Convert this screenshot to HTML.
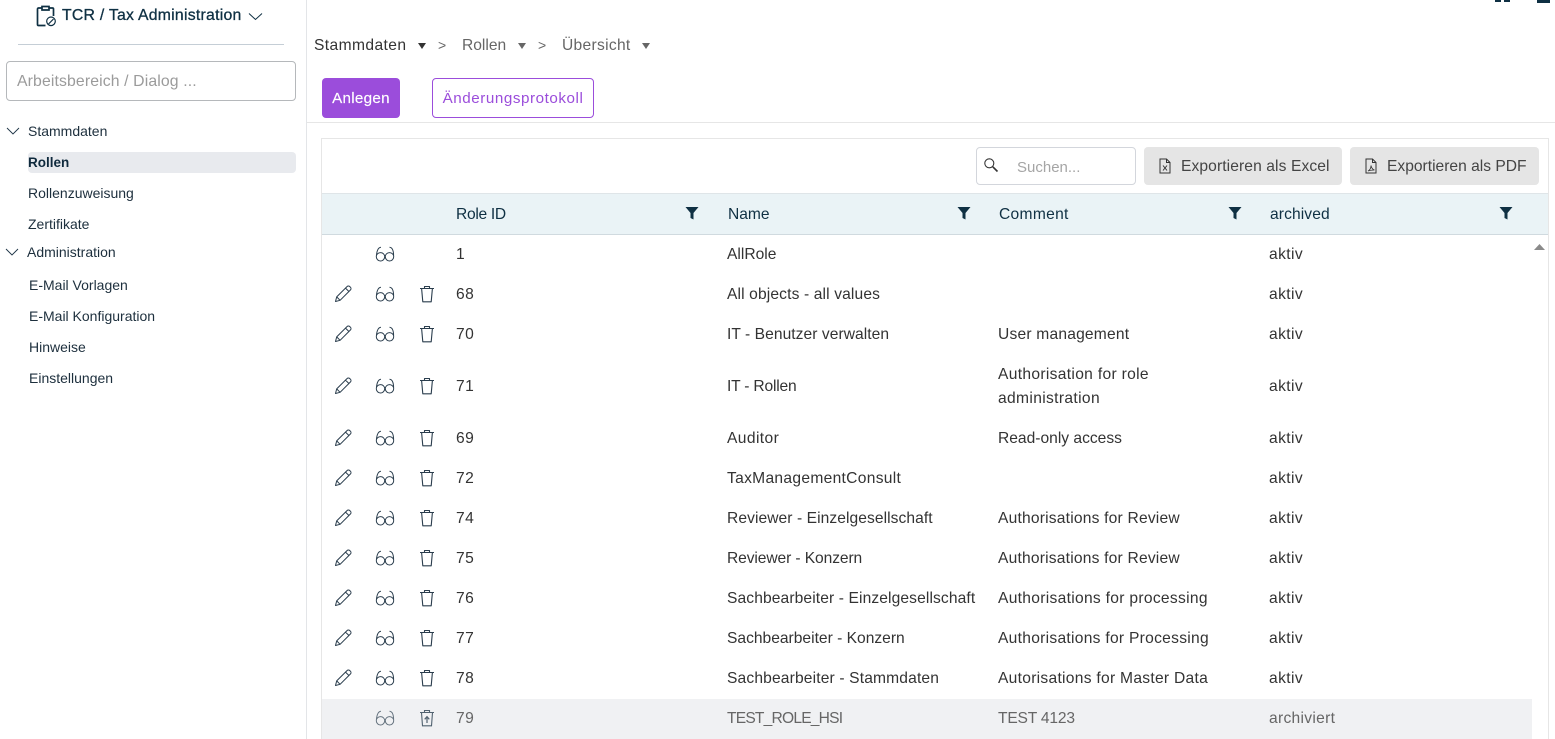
<!DOCTYPE html>
<html lang="de"><head><meta charset="utf-8"><title>Rollen</title>
<style>
html,body{margin:0;padding:0;background:#fff;width:1555px;height:739px;overflow:hidden}
body{font-family:"Liberation Sans",sans-serif;font-size:16px;color:#263238;position:relative}
.t,.b,svg{position:absolute}
.t{white-space:nowrap;line-height:20px;height:20px}
.s{font-size:14px;color:#1d2f3d}
.c{font-size:15.6px;color:#333;margin-top:1px}
.n{letter-spacing:.4px}
.a{letter-spacing:.4px}
.g{color:#666}
.h{font-size:15.6px;color:#0f3043;margin-top:1px}
</style></head><body>
<svg width="0" height="0" style="position:absolute">
<defs>
<symbol id="pen" viewBox="0 0 20 20"><path d="M2.500 17.500l1.200-4.600L14 2.600c.8-.8 2-.8 2.800 0l.6.6c.8.8.8 2 0 2.800L7.100 16.300zM3.700 12.900l3.400 3.400M12.500 4.100l3.400 3.400" fill="none" stroke="#2a3d4d" stroke-width="1" stroke-linejoin="round"/></symbol>
<symbol id="gl" viewBox="0 0 20 20"><path d="M1.300 12.800a4.200 4.200 0 1 0 8.400 0a4.200 4.200 0 1 0-8.400 0zM10.300 12.800a4.200 4.200 0 1 0 8.400 0a4.200 4.200 0 1 0-8.400 0zM9.700 12.200c.2-.4.400-.4.600 0M1.400 12C1.800 7 3 3.500 6 3.300M18.600 12C18.600 7 17.500 3.500 14.500 3.300" fill="none" stroke="#2a3d4d" stroke-width="1"/></symbol>
<symbol id="tr" viewBox="0 0 20 20"><path d="M3 4.500h14M7.500 4.500V2.500h5v2M4.600 4.500l1.200 13.300h8.400l1.200-13.300" fill="none" stroke="#2a3d4d" stroke-width="1.100" stroke-linejoin="round"/></symbol>
<symbol id="fl" viewBox="0 0 14 14"><path d="M.5 1h13L8.500 7v6.500L5.500 12V7z" fill="#0f3043"/></symbol>
</defs></svg>

<div class="b" style="left:306px;top:0;width:1px;height:739px;background:#e3e5e8"></div>

<!-- sidebar -->
<svg style="left:36px;top:4px" width="21" height="23" viewBox="0 0 21 23"><path d="M6 4H2.500a1 1 0 0 0-1 1v15.500a1 1 0 0 0 1 1h7M13 4h3.500a1 1 0 0 1 1 1v7M6 2.500h7v3.500H6z" fill="none" stroke="#0f3043" stroke-width="1.700"/><circle cx="15" cy="17.300" r="4.300" fill="none" stroke="#0f3043" stroke-width="1.200"/><path d="M12.500 20l5-5" stroke="#0f3043" stroke-width="1.200"/></svg>
<div class="t" style="left:62px;top:6px;font-size:15.8px;letter-spacing:.25px;color:#0f3043;-webkit-text-stroke:.3px #0f3043">TCR / Tax Administration</div>
<svg style="left:248px;top:12px" width="15" height="9" viewBox="0 0 15 9"><path d="M1 1.500l6.500 6 6.500-6" fill="none" stroke="#0f3043" stroke-width="1"/></svg>
<div class="b" style="left:18px;top:44px;width:266px;height:1px;background:#c5ced6"></div>
<div class="b" style="left:6px;top:61px;width:288px;height:38px;border:1px solid #b5b8bb;border-radius:4px"></div>
<div class="t" style="left:17px;top:72px;color:#9b9b9b;font-size:15.8px;letter-spacing:.12px">Arbeitsbereich / Dialog ...</div>

<svg style="left:6px;top:127px" width="14" height="8" viewBox="0 0 14 8"><path d="M1 1l6 6 6-6" fill="none" stroke="#1d3345" stroke-width=".9"/></svg>
<div class="t s" style="left:28px;top:121px">Stammdaten</div>
<div class="b" style="left:28px;top:152px;width:268px;height:21px;background:#e8eaee;border-radius:4px"></div>
<div class="t s" style="left:28px;top:152.500px;font-weight:700;font-size:13.500px;color:#0f2a3d">Rollen</div>
<div class="t s" style="left:28px;top:183px">Rollenzuweisung</div>
<div class="t s" style="left:28px;top:214px">Zertifikate</div>
<svg style="left:5px;top:248px" width="14" height="8" viewBox="0 0 14 8"><path d="M1 1l6 6 6-6" fill="none" stroke="#1d3345" stroke-width=".9"/></svg>
<div class="t s" style="left:27px;top:242px">Administration</div>
<div class="t s" style="left:29px;top:275px">E-Mail Vorlagen</div>
<div class="t s" style="left:29px;top:306px">E-Mail Konfiguration</div>
<div class="t s" style="left:29px;top:337px">Hinweise</div>
<div class="t s" style="left:29px;top:368px">Einstellungen</div>

<!-- top right fragments -->
<div class="b" style="left:1495px;top:0;width:6px;height:2px;background:#0f3043"></div>
<div class="b" style="left:1504px;top:0;width:6px;height:2px;background:#0f3043"></div>
<div class="b" style="left:1537px;top:0;width:13px;height:3px;background:#0f3043"></div>

<!-- breadcrumb -->
<div class="t" style="left:314px;top:36px;font-size:15.600px;letter-spacing:.4px;color:#333">Stammdaten</div>
<svg style="left:418px;top:43px" width="8" height="6"><path d="M0 0h8L4 6z" fill="#333"/></svg>
<div class="t" style="left:438px;top:35px;font-size:14px;color:#666">&gt;</div>
<div class="t" style="left:462px;top:36px;font-size:15.600px;color:#666">Rollen</div>
<svg style="left:518px;top:43px" width="8" height="6"><path d="M0 0h8L4 6z" fill="#666"/></svg>
<div class="t" style="left:538px;top:35px;font-size:14px;color:#666">&gt;</div>
<div class="t" style="left:562px;top:36px;font-size:15.600px;letter-spacing:.3px;color:#666">Übersicht</div>
<svg style="left:642px;top:43px" width="8" height="6"><path d="M0 0h8L4 6z" fill="#666"/></svg>

<!-- buttons -->
<div class="b" style="left:322px;top:78px;width:78px;height:40px;background:#9b4ddb;border-radius:4px"></div>
<div class="t" style="left:322px;top:88.500px;width:78px;text-align:center;color:#fff;font-size:15.200px;letter-spacing:.3px;-webkit-text-stroke:.15px #fff">Anlegen</div>
<div class="b" style="left:432px;top:78px;width:160px;height:38px;border:1px solid #9b4ddb;border-radius:4px"></div>
<div class="t" style="left:433px;top:88.500px;width:160px;text-align:center;color:#9b4ddb;font-size:15.200px;letter-spacing:.55px">Änderungsprotokoll</div>
<div class="b" style="left:307px;top:122px;width:1248px;height:1px;background:#e6e6e6"></div>

<!-- table container -->
<div class="b" style="left:321px;top:138px;width:1226px;height:601px;border:1px solid #e6e6e6;border-bottom:0"></div>

<div class="b" style="left:976px;top:147px;width:158px;height:36px;border:1px solid #d3d6dc;border-radius:4px;background:#fff"></div>
<svg style="left:983px;top:157px" width="16" height="16" viewBox="0 0 16 16"><circle cx="6.300" cy="6.300" r="4.500" fill="none" stroke="#333" stroke-width="1.100"/><path d="M9.800 9.800l4.700 4.700" stroke="#333" stroke-width="1.600"/></svg>
<div class="t" style="left:1017px;top:157px;font-size:15px;color:#a5a5a5;margin-top:.5px">Suchen...</div>

<div class="b" style="left:1144px;top:147px;width:198px;height:38px;background:#e5e5e5;border-radius:4px"></div>
<svg style="left:1158px;top:158px" width="14" height="16" viewBox="0 0 14 16"><path d="M2 1h6.500L12 4.500V15H2zM8.500 1v3.500H12" fill="none" stroke="#333" stroke-width="1"/><path d="M5 7.500l4 5M9 7.500l-4 5" stroke="#333" stroke-width="1"/></svg>
<div class="t" style="left:1181px;top:156.500px;font-size:15.600px;letter-spacing:.1px;color:#444">Exportieren als Excel</div>
<div class="b" style="left:1350px;top:147px;width:189px;height:38px;background:#e5e5e5;border-radius:4px"></div>
<svg style="left:1364px;top:158px" width="14" height="16" viewBox="0 0 14 16"><path d="M2 1h6.500L12 4.500V15H2zM8.500 1v3.500H12" fill="none" stroke="#333" stroke-width="1"/><path d="M4 13c2-1 3-3 3-5.500c.5 2.500 1.500 4 3.500 4.500c-2 0-4 0-6.500 1z" fill="none" stroke="#333" stroke-width=".8"/></svg>
<div class="t" style="left:1387px;top:156.500px;font-size:15.600px;color:#444">Exportieren als PDF</div>

<!-- header -->
<div class="b" style="left:322px;top:193px;width:1226px;height:42px;background:#eaf3f6;border-top:1px solid #dfe5e8;border-bottom:1px solid #d0dadf;box-sizing:border-box"></div>
<div class="t h" style="left:456px;top:204px;letter-spacing:-.3px">Role ID</div>
<svg style="left:685px;top:206px" width="14" height="14"><use href="#fl"/></svg>
<div class="t h" style="left:728px;top:204px">Name</div>
<svg style="left:957px;top:206px" width="14" height="14"><use href="#fl"/></svg>
<div class="t h" style="left:999px;top:204px;letter-spacing:.3px">Comment</div>
<svg style="left:1228px;top:206px" width="14" height="14"><use href="#fl"/></svg>
<div class="t h" style="left:1270px;top:204px;letter-spacing:.1px">archived</div>
<svg style="left:1499px;top:206px" width="14" height="14"><use href="#fl"/></svg>

<svg style="left:1534px;top:244px" width="11" height="6"><path d="M0 6L5.500 0 11 6z" fill="#8a8a8a"/></svg>

<!-- row 79 background -->
<div class="b" style="left:322px;top:699px;width:1210px;height:40px;background:#f0f1f3"></div>

<!-- icons -->
<svg style="left:375px;top:244px" width="20" height="20"><use href="#gl"/></svg>

<svg style="left:333px;top:284px" width="20" height="20"><use href="#pen"/></svg><svg style="left:375px;top:284px" width="20" height="20"><use href="#gl"/></svg><svg style="left:417px;top:284px" width="20" height="20"><use href="#tr"/></svg>
<svg style="left:333px;top:324px" width="20" height="20"><use href="#pen"/></svg><svg style="left:375px;top:324px" width="20" height="20"><use href="#gl"/></svg><svg style="left:417px;top:324px" width="20" height="20"><use href="#tr"/></svg>
<svg style="left:333px;top:376px" width="20" height="20"><use href="#pen"/></svg><svg style="left:375px;top:376px" width="20" height="20"><use href="#gl"/></svg><svg style="left:417px;top:376px" width="20" height="20"><use href="#tr"/></svg>
<svg style="left:333px;top:428px" width="20" height="20"><use href="#pen"/></svg><svg style="left:375px;top:428px" width="20" height="20"><use href="#gl"/></svg><svg style="left:417px;top:428px" width="20" height="20"><use href="#tr"/></svg>
<svg style="left:333px;top:468px" width="20" height="20"><use href="#pen"/></svg><svg style="left:375px;top:468px" width="20" height="20"><use href="#gl"/></svg><svg style="left:417px;top:468px" width="20" height="20"><use href="#tr"/></svg>
<svg style="left:333px;top:508px" width="20" height="20"><use href="#pen"/></svg><svg style="left:375px;top:508px" width="20" height="20"><use href="#gl"/></svg><svg style="left:417px;top:508px" width="20" height="20"><use href="#tr"/></svg>
<svg style="left:333px;top:548px" width="20" height="20"><use href="#pen"/></svg><svg style="left:375px;top:548px" width="20" height="20"><use href="#gl"/></svg><svg style="left:417px;top:548px" width="20" height="20"><use href="#tr"/></svg>
<svg style="left:333px;top:588px" width="20" height="20"><use href="#pen"/></svg><svg style="left:375px;top:588px" width="20" height="20"><use href="#gl"/></svg><svg style="left:417px;top:588px" width="20" height="20"><use href="#tr"/></svg>
<svg style="left:333px;top:628px" width="20" height="20"><use href="#pen"/></svg><svg style="left:375px;top:628px" width="20" height="20"><use href="#gl"/></svg><svg style="left:417px;top:628px" width="20" height="20"><use href="#tr"/></svg>
<svg style="left:333px;top:668px" width="20" height="20"><use href="#pen"/></svg><svg style="left:375px;top:668px" width="20" height="20"><use href="#gl"/></svg><svg style="left:417px;top:668px" width="20" height="20"><use href="#tr"/></svg>
<svg style="left:375px;top:708px;opacity:.7" width="20" height="20"><use href="#gl"/></svg>
<svg style="left:417px;top:708px;opacity:.75" width="20" height="20" viewBox="0 0 20 20"><path d="M3 4.500h14M7.500 4.500V2.500h5v2M4.500 4.500l1 13.300h9l1-13.300" fill="none" stroke="#1d3345" stroke-width="1.100"/><path d="M10 15V9M7.700 11.300L10 8.700l2.300 2.600" fill="none" stroke="#1d3345" stroke-width="1.200"/></svg>

<!-- rows -->
<div class="t c n" style="left:456px;top:244px">1</div><div class="t c" style="left:727px;top:244px">AllRole</div><div class="t c a" style="left:1269px;top:244px">aktiv</div>
<div class="t c n" style="left:456px;top:284px">68</div><div class="t c" style="left:727px;top:284px;letter-spacing:.13px">All objects - all values</div><div class="t c a" style="left:1269px;top:284px">aktiv</div>
<div class="t c n" style="left:456px;top:324px">70</div><div class="t c" style="left:727px;top:324px;letter-spacing:.05px">IT - Benutzer verwalten</div><div class="t c" style="left:998px;top:324px;letter-spacing:.2px">User management</div><div class="t c a" style="left:1269px;top:324px">aktiv</div>
<div class="t c n" style="left:456px;top:376px">71</div><div class="t c" style="left:727px;top:376px;letter-spacing:-.2px">IT - Rollen</div><div class="t c" style="left:998px;top:364px;letter-spacing:.32px">Authorisation for role</div><div class="t c" style="left:998px;top:388px;letter-spacing:.35px">administration</div><div class="t c a" style="left:1269px;top:376px">aktiv</div>
<div class="t c n" style="left:456px;top:428px">69</div><div class="t c" style="left:727px;top:428px;letter-spacing:.4px">Auditor</div><div class="t c" style="left:998px;top:428px">Read-only access</div><div class="t c a" style="left:1269px;top:428px">aktiv</div>
<div class="t c n" style="left:456px;top:468px">72</div><div class="t c" style="left:727px;top:468px;letter-spacing:.3px">TaxManagementConsult</div><div class="t c a" style="left:1269px;top:468px">aktiv</div>
<div class="t c n" style="left:456px;top:508px">74</div><div class="t c" style="left:727px;top:508px;letter-spacing:.07px">Reviewer - Einzelgesellschaft</div><div class="t c" style="left:998px;top:508px;letter-spacing:.2px">Authorisations for Review</div><div class="t c a" style="left:1269px;top:508px">aktiv</div>
<div class="t c n" style="left:456px;top:548px">75</div><div class="t c" style="left:727px;top:548px;letter-spacing:-.1px">Reviewer - Konzern</div><div class="t c" style="left:998px;top:548px;letter-spacing:.2px">Authorisations for Review</div><div class="t c a" style="left:1269px;top:548px">aktiv</div>
<div class="t c n" style="left:456px;top:588px">76</div><div class="t c" style="left:727px;top:588px;letter-spacing:.11px">Sachbearbeiter - Einzelgesellschaft</div><div class="t c" style="left:998px;top:588px;letter-spacing:.3px">Authorisations for processing</div><div class="t c a" style="left:1269px;top:588px">aktiv</div>
<div class="t c n" style="left:456px;top:628px">77</div><div class="t c" style="left:727px;top:628px">Sachbearbeiter - Konzern</div><div class="t c" style="left:998px;top:628px;letter-spacing:.28px">Authorisations for Processing</div><div class="t c a" style="left:1269px;top:628px">aktiv</div>
<div class="t c n" style="left:456px;top:668px">78</div><div class="t c" style="left:727px;top:668px;letter-spacing:.15px">Sachbearbeiter - Stammdaten</div><div class="t c" style="left:998px;top:668px;letter-spacing:.28px">Autorisations for Master Data</div><div class="t c a" style="left:1269px;top:668px">aktiv</div>
<div class="t c g n" style="left:456px;top:708px">79</div><div class="t c g" style="left:727px;top:708px;letter-spacing:-.8px">TEST_ROLE_HSI</div><div class="t c g" style="left:998px;top:708px;letter-spacing:-.2px">TEST 4123</div><div class="t c g" style="left:1269px;top:708px;letter-spacing:.3px">archiviert</div>
</body></html>
